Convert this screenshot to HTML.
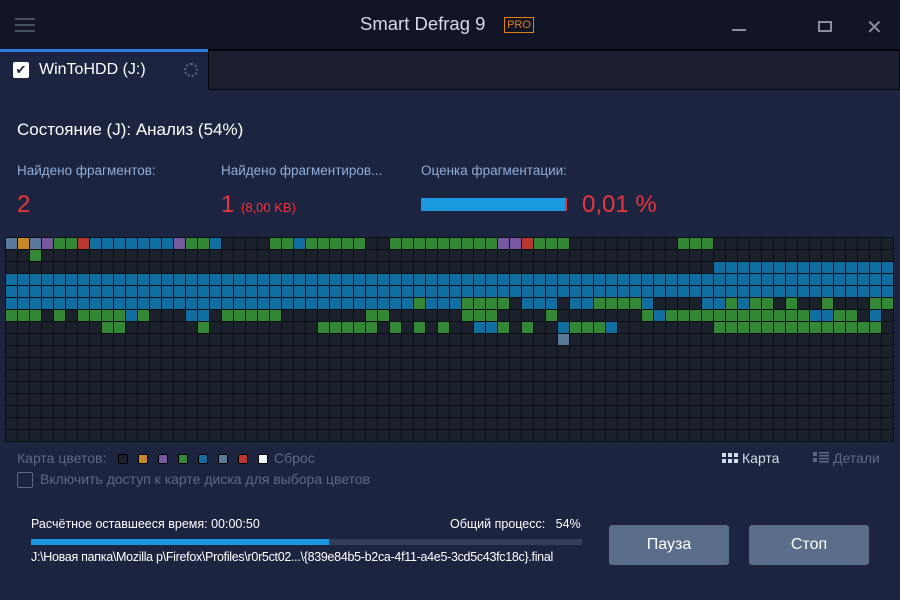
<!DOCTYPE html>
<html><head><meta charset="utf-8"><style>
*{margin:0;padding:0;box-sizing:border-box}
body{width:900px;height:600px;background:#1d2440;font-family:"Liberation Sans","DejaVu Sans",sans-serif;position:relative;overflow:hidden;color:#fff}
.abs{position:absolute;white-space:nowrap}
#title{left:0;top:0;width:900px;height:50px;background:#121526;border-bottom:1px solid #05060c}
#tabs{left:0;top:50px;width:900px;height:40px;background:#1d2440}
#tabrest{left:208px;top:50px;width:692px;height:40px;background:#1c1f30;border:1px solid #07080e}
#tabact{left:0;top:49px;width:208px;height:41px;background:#1d2440;border-top:3px solid #2b7de0}
.lbl{color:#8eaedb;font-size:13.5px}
.red{color:#e8363e}
#grid{left:5px;top:237px;width:889px;height:205px;background:#0b0e14;display:grid;grid-template-columns:repeat(74,11px);grid-auto-rows:11px;gap:1px;padding:1px}
#grid div{background:#1a212b}
.sw{display:inline-block;width:10px;height:10px;border:1px solid #000;margin-right:10px;vertical-align:-1px}
.btn{position:absolute;top:525px;width:120px;height:40px;background:#5a6d8a;border-radius:3px;color:#fff;font-size:16px;text-align:center;line-height:40px}
</style></head><body>
<div class="abs" id="title"></div>
<div class="abs" style="left:15px;top:18px;width:20px;height:2px;background:#4a5064;box-shadow:0 6px 0 #4a5064,0 12px 0 #4a5064"></div>
<div class="abs" style="left:360px;top:13px;font-size:18.5px;color:#d4dbe6">Smart Defrag 9</div>
<div class="abs" style="left:504px;top:17px;width:30px;height:16px;border:1px solid #e07f14;color:#e07f14;font-size:11px;line-height:14px;text-align:center">PRO</div>
<div class="abs" style="left:732px;top:29px;width:14px;height:2px;background:#8a909c"></div>
<div class="abs" style="left:818px;top:21px;width:14px;height:11px;border:2px solid #8a909c"></div>
<div class="abs" style="left:866px;top:15px;font-size:20px;color:#8a909c">✕</div>
<div class="abs" id="tabs"></div>
<div class="abs" id="tabrest"></div>
<div class="abs" id="tabact"></div>
<div class="abs" style="left:13px;top:62px;width:16px;height:16px;background:#fff;border-radius:2px;color:#1d2440;font-size:13px;line-height:16px;text-align:center;font-weight:bold">✔</div>
<div class="abs" style="left:39px;top:61px;font-size:16px;color:#fff">WinToHDD (J:)</div>
<div class="abs" style="left:184px;top:63px;width:14px;height:14px;border:2px dotted #5a6275;border-radius:50%"></div>

<div class="abs" style="left:17px;top:120px;font-size:17px;color:#fff">Состояние (J): Анализ (54%)</div>
<div class="abs lbl" style="left:17px;top:163px">Найдено фрагментов:</div>
<div class="abs lbl" style="left:221px;top:163px">Найдено фрагментиров...</div>
<div class="abs lbl" style="left:421px;top:163px">Оценка фрагментации:</div>
<div class="abs red" style="left:17px;top:191px;font-size:24px">2</div>
<div class="abs red" style="left:221px;top:191px;font-size:24px">1 <span style="font-size:13px">(8,00 KB)</span></div>
<div class="abs" style="left:421px;top:198px;width:146px;height:13px;background:#1a98e0;border-right:2px solid #e8363e"></div>
<div class="abs red" style="left:582px;top:191px;font-size:24px">0,01 %</div>

<div class="abs" id="grid"></div>

<div class="abs" style="left:17px;top:450px;font-size:14px;color:#5e6a85">Карта цветов:&nbsp;&nbsp;&nbsp;<span class="sw" style="background:#1a212b"></span><span class="sw" style="background:#c8882a"></span><span class="sw" style="background:#7558a0"></span><span class="sw" style="background:#338836"></span><span class="sw" style="background:#106ea0"></span><span class="sw" style="background:#5b7a99"></span><span class="sw" style="background:#b8382f"></span><span class="sw" style="background:#f0f6ff;margin-right:6px"></span>Сброс</div>
<div class="abs" style="left:17px;top:472px;width:16px;height:16px;border:1px solid #5e6a85;border-radius:2px"></div>
<div class="abs" style="left:40px;top:471px;font-size:14px;color:#5e6a85">Включить доступ к карте диска для выбора цветов</div>
<svg class="abs" style="left:722px;top:453px" width="16" height="10"><g fill="#d4dbe6"><rect x="0" y="0" width="4" height="4"/><rect x="6" y="0" width="4" height="4"/><rect x="12" y="0" width="4" height="4"/><rect x="0" y="6" width="4" height="4"/><rect x="6" y="6" width="4" height="4"/><rect x="12" y="6" width="4" height="4"/></g></svg>
<div class="abs" style="left:742px;top:450px;font-size:14px;color:#d4dbe6">Карта</div>
<svg class="abs" style="left:813px;top:452px" width="16" height="11"><g fill="#5e6a85"><rect x="0" y="0" width="4" height="4"/><rect x="0" y="6" width="4" height="4"/><rect x="6" y="0" width="10" height="1.5"/><rect x="6" y="3" width="10" height="1.5"/><rect x="6" y="6" width="10" height="1.5"/><rect x="6" y="9" width="10" height="1.5"/></g></svg>
<div class="abs" style="left:833px;top:450px;font-size:14px;color:#5e6a85">Детали</div>

<div class="abs" style="left:31px;top:517px;font-size:12.5px;color:#fff">Расчётное оставшееся время: 00:00:50</div>
<div class="abs" style="left:450px;top:517px;font-size:12.5px;color:#fff">Общий процесс:&nbsp;&nbsp; 54%</div>
<div class="abs" style="left:31px;top:539px;width:551px;height:6px;background:#363d58"><div style="width:298px;height:6px;background:#1a98e0"></div></div>
<div class="abs" style="left:31px;top:550px;font-size:12.5px;color:#fff;letter-spacing:-0.3px">J:\Новая папка\Mozilla p\Firefox\Profiles\r0r5ct02...\{839e84b5-b2ca-4f11-a4e5-3cd5c43fc18c}.final</div>
<div class="btn" style="left:609px">Пауза</div>
<div class="btn" style="left:749px">Стоп</div>
<script>
var rows=[
"sospggrbbbbbbbpggbddddggbgggggddgggggggggpprgggdddddddddgggddddddddddddddd",
"ddgddddddddddddddddddddddddddddddddddddddddddddddddddddddddddddddddddddddd",
"dddddddddddddddddddddddddddddddddddddddddddddddddddddddddddbbbbbbbbbbbbbbb",
"bbbbbbbbbbbbbbbbbbbbbbbbbbbbbbbbbbbbbbbbbbbbbbbbbbbbbbbbbbbbbbbbbbbbbbbbbb",
"bbbbbbbbbbbbbbbbbbbbbbbbbbbbbbbbbbbbbbbbbbbbbbbbbbbbbbbbbbbbbbbbbbbbbbbbbb",
"bbbbbbbbbbbbbbbbbbbbbbbbbbbbbbbbbbgbbbggggdbbbdbbggggbddddbbgbggdgddgdddgg",
"gggdgdggggbgdddbbdgggggdddddddggddddddgggddddgdddddddgbggggggggggggbbggdbdd",
"ddddddddggddddddgdddddddddgggggdgdgdgddbbgdgddbgggbddddddddggggggggggggggdd",
"ddddddddddddddddddddddddddddddddddddddddddddddsddddddddddddddddddddddddddd"];
var col={d:"#1a212b",b:"#106ea0",g:"#338836",s:"#5b7a99",o:"#c8882a",p:"#7558a0",r:"#b8382f"};
var g=document.getElementById("grid"),h="";
for(var r=0;r<17;r++)for(var c=0;c<74;c++){var ch=(rows[r]||"")[c]||"d";h+='<div style="background:'+col[ch]+'"></div>';}
g.innerHTML=h;
</script>
</body></html>
